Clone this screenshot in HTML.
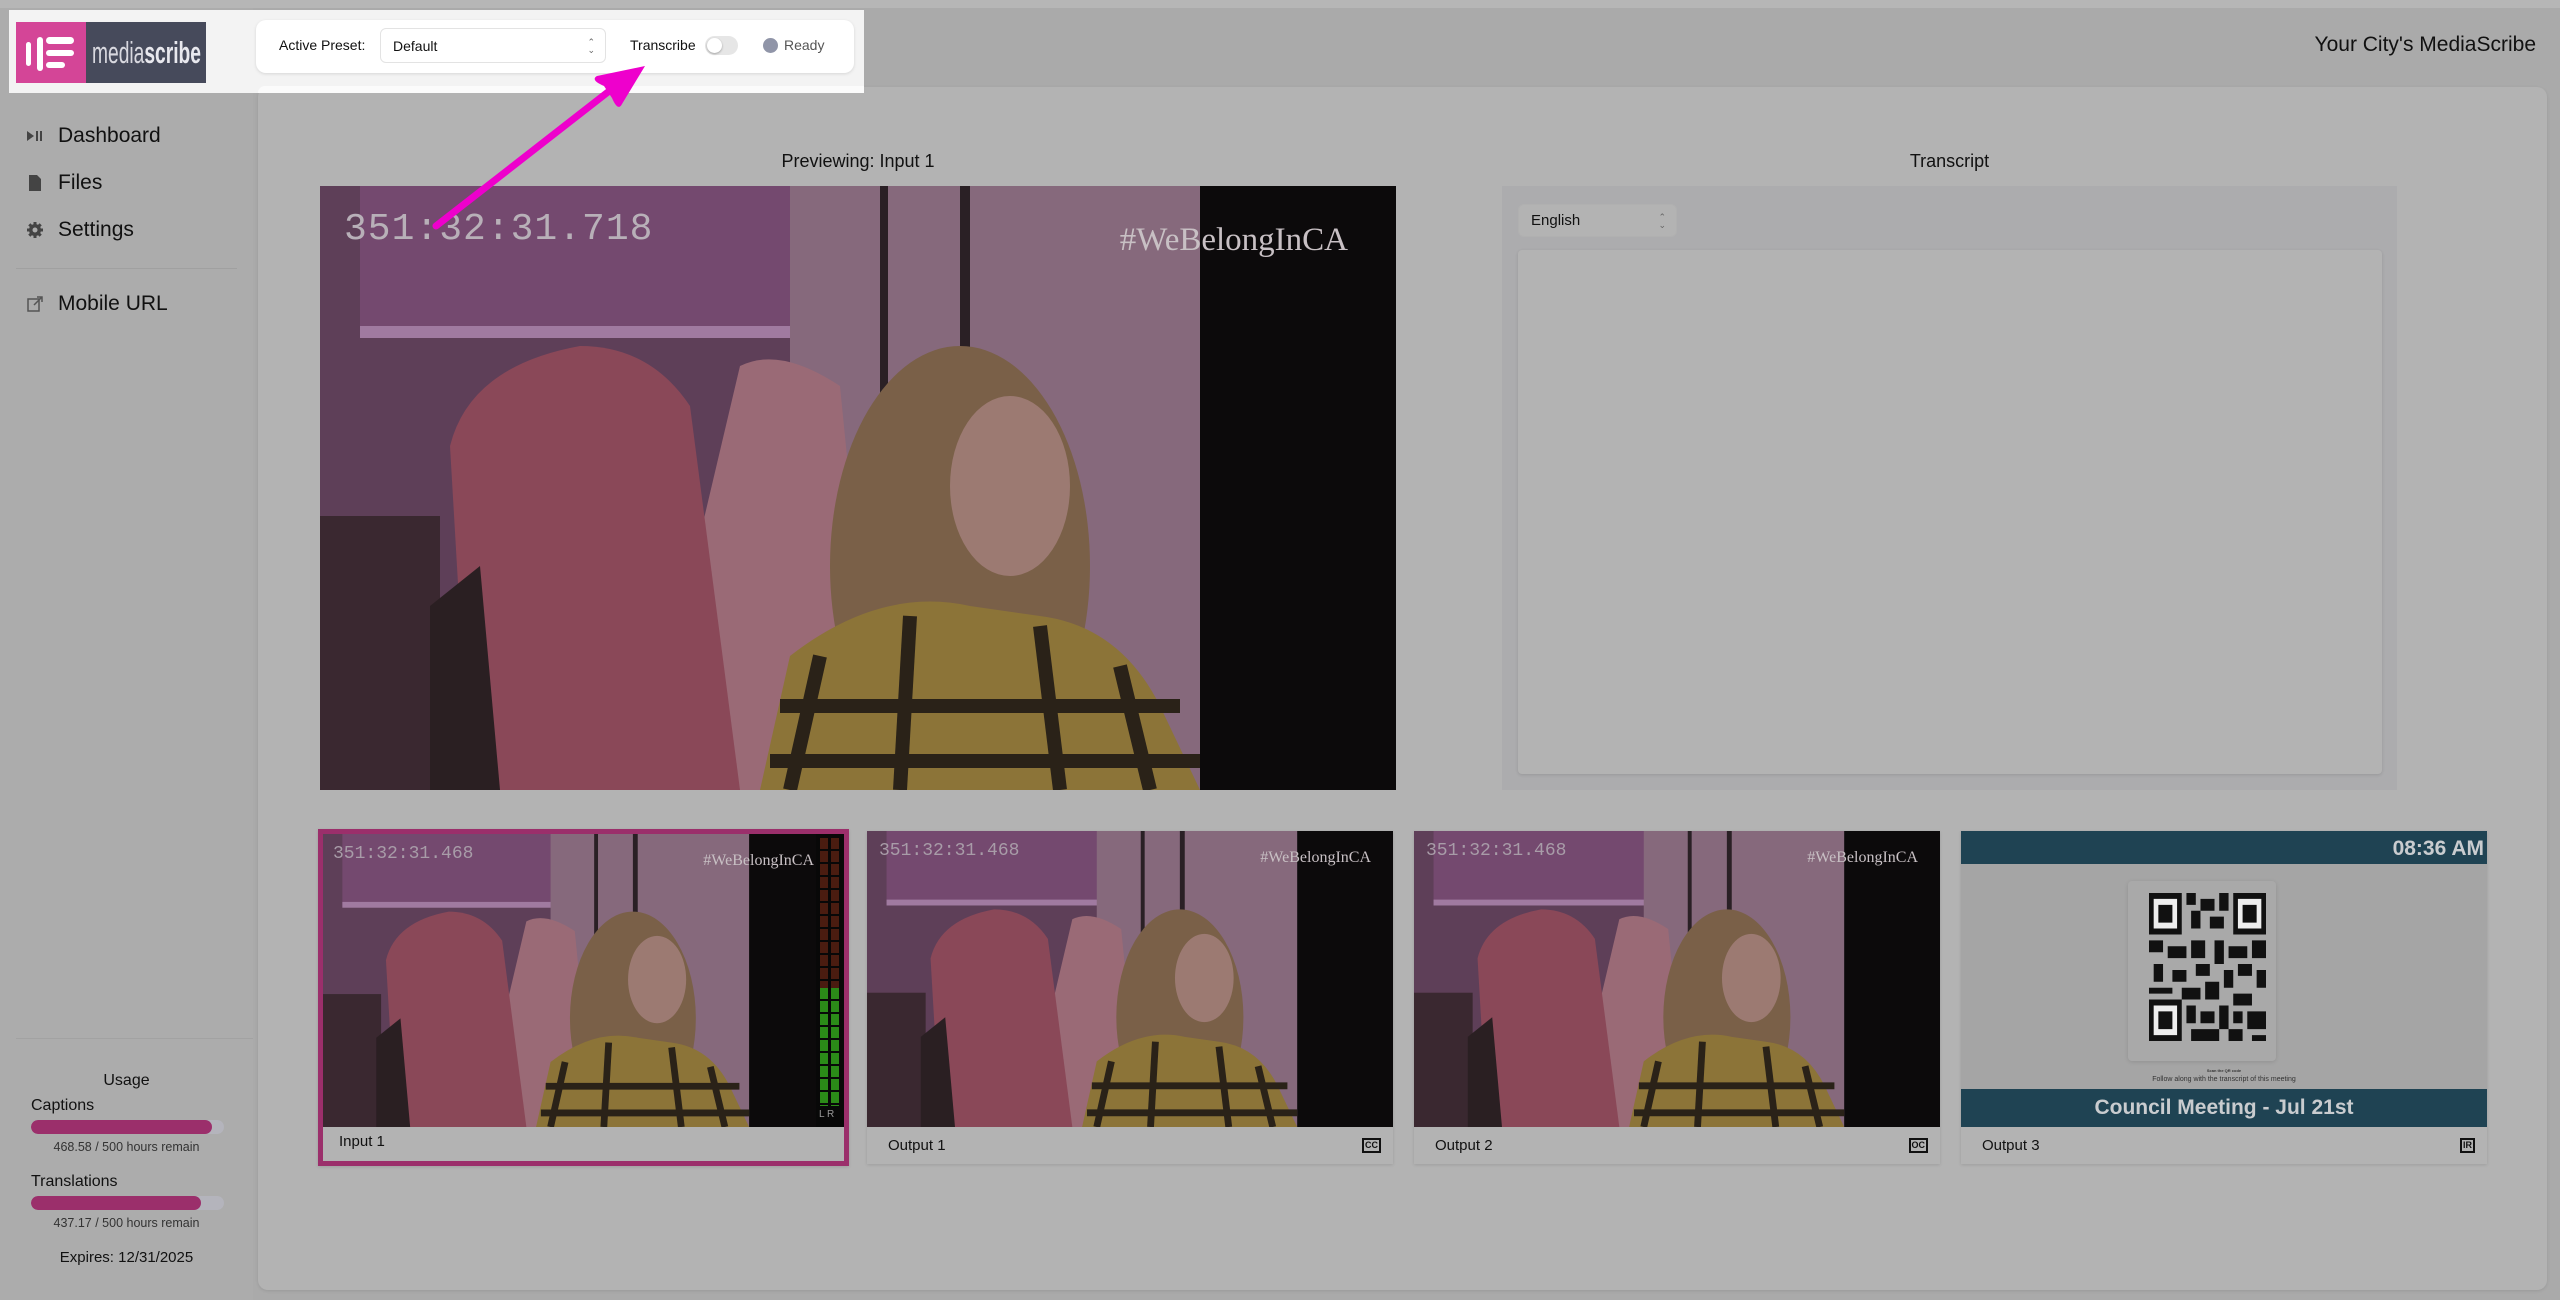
<!DOCTYPE html>
<html><head><meta charset="utf-8">
<style>
*{box-sizing:border-box;margin:0;padding:0}
body{width:2560px;height:1300px;background:#aaaaaa;font-family:"Liberation Sans",sans-serif;color:#111;position:relative;overflow:hidden}
.abs{position:absolute}
.top{left:0;top:0;width:2560px;height:8px;background:#b6b6b6}
.panel{left:258px;top:87px;width:2289px;height:1203px;background:#b3b3b3;border-radius:10px;box-shadow:0 1px 3px rgba(0,0,0,.1)}
.side{left:0;top:8px;width:253px;height:1292px;background:#acacac}
.nav{left:26px;font-size:21px;color:#111;display:flex;align-items:center}
.nav svg{width:18px;height:18px;margin-right:14px;fill:#444}
.hl{left:9px;top:10px;width:855px;height:83px;background:#f3f3f3}
.card{left:256px;top:20px;width:598px;height:53px;background:#fff;border-radius:10px;box-shadow:0 1px 3px rgba(0,0,0,.12)}
.sel{border:1px solid #e3e3e3;border-radius:6px;background:#fff;font-size:15px;display:flex;align-items:center;padding-left:12px}
.caret{position:absolute;right:10px;top:50%;transform:translateY(-50%);font-size:9px;line-height:8px;color:#666;text-align:center}
.vid{overflow:hidden;background:#4a3545}
.thumb{background:#b3b3b3;box-shadow:0 1px 3px rgba(0,0,0,.12)}
.lab{position:absolute;left:0;right:0;bottom:0;height:37px;font-size:15px;display:flex;align-items:center;padding-left:21px}
.badge{position:absolute;right:12px;top:11px;border:2px solid #111;font-size:9px;font-weight:bold;padding:0 1px;line-height:11px}
.bar{height:14px;border-radius:7px;background:#b4b4bc;width:193px;left:31px;overflow:hidden}
.bar div{height:100%;background:#9b2f6b;border-radius:7px}
.small{font-size:12.5px;color:#333;width:253px;text-align:center;left:0}
</style></head><body>
<svg width="0" height="0" style="position:absolute">
<defs>
<symbol id="scene" viewBox="0 0 1076 604" preserveAspectRatio="none">
<rect width="1076" height="604" fill="#5a3d55"/>
<rect x="0" y="0" width="560" height="604" fill="#5e3f58"/>
<rect x="40" y="0" width="440" height="150" fill="#74496f"/>
<rect x="40" y="140" width="440" height="12" fill="#a07aa0"/>
<rect x="0" y="330" width="120" height="274" fill="#3a2830"/>
<rect x="470" y="0" width="420" height="604" fill="#86697c"/>
<rect x="560" y="0" width="8" height="300" fill="#2a2025"/>
<rect x="640" y="0" width="10" height="200" fill="#2a2025"/>
<rect x="880" y="0" width="196" height="604" fill="#0c0a0b"/>
<path d="M420 180 Q460 160 520 200 L560 604 L320 604 Z" fill="#9a6a76"/>
<path d="M130 260 Q150 180 260 160 Q330 160 370 220 L420 604 L150 604 Z" fill="#8a4858"/>
<path d="M110 420 L160 380 L180 604 L110 604 Z" fill="#2a1f22"/>
<ellipse cx="640" cy="380" rx="130" ry="220" fill="#7a6048"/>
<ellipse cx="690" cy="300" rx="60" ry="90" fill="#9c7a72"/>
<path d="M470 470 Q560 400 650 420 L720 430 Q800 440 840 520 L880 604 L440 604 Z" fill="#8c7438"/>
<g stroke="#2a2218" stroke-width="14" fill="none">
<path d="M500 470 L470 604"/><path d="M590 430 L580 604"/><path d="M720 440 L740 604"/><path d="M800 480 L830 604"/>
<path d="M460 520 L860 520"/><path d="M450 575 L880 575"/>
</g>
</symbol>
<symbol id="qr" viewBox="0 0 25 25">
<g fill="#111">
<path d="M0 0h7v7h-7zM18 0h7v7h-7zM0 18h7v7h-7z"/>
</g>
<g fill="#eee"><path d="M1 1h5v5h-5zM19 1h5v5h-5zM1 19h5v5h-5z"/></g>
<g fill="#111"><path d="M2 2h3v3h-3zM20 2h3v3h-3zM2 20h3v3h-3z"/>
<path d="M8 0h2v2h-2zM11 1h3v2h-3zM15 0h2v3h-2zM9 3h2v3h-2zM13 4h3v2h-3zM0 8h3v2h-3zM4 9h4v2h-4zM9 8h3v3h-3zM14 8h2v4h-2zM17 9h4v2h-4zM22 8h3v3h-3zM1 12h2v3h-2zM5 13h3v2h-3zM10 12h3v2h-3zM16 13h2v3h-2zM19 12h3v2h-3zM23 13h2v3h-2zM0 16h5v1h-5zM7 16h4v2h-4zM12 15h3v3h-3zM18 17h4v2h-4zM8 19h2v3h-2zM11 20h3v2h-3zM15 19h2v4h-2zM18 20h2v2h-2zM21 20h4v3h-4zM9 23h6v2h-6zM17 23h3v2h-3zM22 24h3v1h-3z"/></g>
</symbol>
</defs>
</svg>

<div class="abs top"></div>
<div class="abs side"></div>
<div class="abs" style="left:16px;top:1038px;width:237px;height:1px;background:#a2a2a2"></div>
<div class="abs" style="left:16px;top:268px;width:221px;height:1px;background:#a0a0a0"></div>

<div class="abs nav" style="top:124px"><svg viewBox="0 0 18 18"><path d="M1 4l7 5-7 5z"/><rect x="10" y="4" width="2" height="10"/><rect x="14" y="4" width="2" height="10"/></svg>Dashboard</div>
<div class="abs nav" style="top:171px"><svg viewBox="0 0 18 18"><path d="M3 1h8l4 4v12h-12z"/></svg>Files</div>
<div class="abs nav" style="top:218px"><svg viewBox="0 0 18 18"><circle cx="9" cy="9" r="6"/><g stroke="#444" stroke-width="3"><path d="M9 1v16M1 9h16M3.3 3.3l11.4 11.4M14.7 3.3L3.3 14.7"/></g><circle cx="9" cy="9" r="2.5" fill="#acacac"/></svg>Settings</div>
<div class="abs nav" style="top:292px"><svg viewBox="0 0 18 18" style="fill:none;stroke:#555;stroke-width:1.5"><rect x="2" y="4" width="11" height="12"/><path d="M8 10L16 2M11 2h5v5"/></svg>Mobile URL</div>

<div class="abs" style="left:0;top:1072px;width:253px;text-align:center;font-size:16px">Usage</div>
<div class="abs" style="left:31px;top:1097px;font-size:16px">Captions</div>
<div class="abs bar" style="top:1120px"><div style="width:181px"></div></div>
<div class="abs small" style="top:1140px">468.58 / 500 hours remain</div>
<div class="abs" style="left:31px;top:1173px;font-size:16px">Translations</div>
<div class="abs bar" style="top:1196px"><div style="width:170px"></div></div>
<div class="abs small" style="top:1216px">437.17 / 500 hours remain</div>
<div class="abs" style="left:0;top:1249px;width:253px;text-align:center;font-size:15px">Expires: 12/31/2025</div>

<div class="abs" style="right:24px;top:33px;font-size:21px">Your City's MediaScribe</div>

<div class="abs panel"></div>

<div class="abs" style="left:320px;top:151px;width:1076px;text-align:center;font-size:18px">Previewing: Input 1</div>
<div class="abs vid" style="left:320px;top:186px;width:1076px;height:604px">
<svg width="1076" height="604"><use href="#scene"/></svg>
<div class="abs" style="left:24px;top:22px;font-family:'Liberation Mono',monospace;font-size:38px;color:#b8b0b8;letter-spacing:1px">351:32:31.718</div>
<div class="abs" style="right:48px;top:36px;font-family:'Liberation Serif',serif;font-size:33px;color:#c8c0c4">#WeBelongInCA</div>
</div>

<div class="abs" style="left:1502px;top:151px;width:895px;text-align:center;font-size:18px">Transcript</div>
<div class="abs" style="left:1502px;top:186px;width:895px;height:604px;background:#acacae"></div>
<div class="abs sel" style="left:1518px;top:204px;width:159px;height:33px;background:#b3b3b3;border-color:#b0b0b0;font-size:15px">English<div class="caret">⌃<br>⌄</div></div>
<div class="abs" style="left:1518px;top:250px;width:864px;height:524px;background:#b3b3b3;border-radius:4px;box-shadow:0 1px 3px rgba(0,0,0,.12)"></div>

<!-- thumbs -->
<div class="abs thumb" style="left:318px;top:829px;width:531px;height:337px;border:5px solid #9b2f6b">
<div class="abs vid" style="left:0;top:0;width:521px;height:293px">
<svg width="521" height="293"><use href="#scene"/></svg>
<div class="abs" style="left:10px;top:10px;font-family:'Liberation Mono',monospace;font-size:18px;color:#a89ca8">351:32:31.468</div>
<div class="abs" style="right:30px;top:18px;font-family:'Liberation Serif',serif;font-size:16px;color:#c8c0c4">#WeBelongInCA</div>
<div class="abs" style="right:0;top:0;width:28px;height:293px;background:#080808">
<div class="abs" style="left:4px;top:4px;width:8px;height:150px;background:repeating-linear-gradient(#4a1c10 0 11px,#080808 11px 13px)"></div>
<div class="abs" style="left:15px;top:4px;width:8px;height:150px;background:repeating-linear-gradient(#4a1c10 0 11px,#080808 11px 13px)"></div>
<div class="abs" style="left:4px;top:154px;width:8px;height:118px;background:repeating-linear-gradient(#2b8a18 0 11px,#080808 11px 13px)"></div>
<div class="abs" style="left:15px;top:154px;width:8px;height:118px;background:repeating-linear-gradient(#2b8a18 0 11px,#080808 11px 13px)"></div>
<div class="abs" style="left:3px;top:275px;font-size:10px;color:#999">L R</div>
</div>
</div>
<div class="lab" style="padding-left:16px;height:39px">Input 1</div>
</div>

<div class="abs thumb" style="left:867px;top:831px;width:526px;height:333px">
<div class="abs vid" style="left:0;top:0;width:526px;height:296px"><svg width="526" height="296"><use href="#scene"/></svg>
<div class="abs" style="left:12px;top:10px;font-family:'Liberation Mono',monospace;font-size:18px;color:#a89ca8">351:32:31.468</div>
<div class="abs" style="right:22px;top:18px;font-family:'Liberation Serif',serif;font-size:16px;color:#c8c0c4">#WeBelongInCA</div></div>
<div class="lab">Output 1<span class="badge">CC</span></div>
</div>

<div class="abs thumb" style="left:1414px;top:831px;width:526px;height:333px">
<div class="abs vid" style="left:0;top:0;width:526px;height:296px"><svg width="526" height="296"><use href="#scene"/></svg>
<div class="abs" style="left:12px;top:10px;font-family:'Liberation Mono',monospace;font-size:18px;color:#a89ca8">351:32:31.468</div>
<div class="abs" style="right:22px;top:18px;font-family:'Liberation Serif',serif;font-size:16px;color:#c8c0c4">#WeBelongInCA</div></div>
<div class="lab">Output 2<span class="badge">OC</span></div>
</div>

<div class="abs thumb" style="left:1961px;top:831px;width:526px;height:333px">
<div class="abs" style="left:0;top:0;width:526px;height:296px;background:#a5a5a5;overflow:hidden">
<div class="abs" style="left:0;top:0;width:526px;height:33px;background:#1f4353;color:#c9cccf;font-weight:bold;font-size:21px;text-align:right;padding:6px 3px 0 0">08:36 AM</div>
<div class="abs" style="left:167px;top:50px;width:148px;height:180px;background:#a9a9a9;border-radius:4px;box-shadow:0 1px 4px rgba(0,0,0,.12)"></div>
<svg class="abs" style="left:188px;top:62px" width="117" height="148" viewBox="0 0 25 25" preserveAspectRatio="none"><use href="#qr"/></svg>
<div class="abs" style="left:0;top:237px;width:526px;text-align:center;font-size:4px;color:#333;font-weight:bold">Scan the QR code</div>
<div class="abs" style="left:0;top:245px;width:526px;text-align:center;font-size:7px;color:#333">Follow along with the transcript of this meeting</div>
<div class="abs" style="left:0;top:258px;width:526px;height:38px;background:#1f4353;color:#c9cccf;font-weight:bold;font-size:21px;text-align:center;padding-top:7px">Council Meeting - Jul 21st</div>
</div>
<div class="lab">Output 3<span class="badge">IR</span></div>
</div>

<!-- highlighted header -->
<div class="abs hl"></div>
<div class="abs" style="left:258px;top:86px;width:606px;height:7px;background:#fbfbfb;border-radius:8px 0 0 0"></div>
<div class="abs" style="left:16px;top:22px;width:70px;height:61px;background:#d44597"></div>
<div class="abs" style="left:86px;top:22px;width:120px;height:61px;background:#464a5b"></div>
<svg class="abs" style="left:16px;top:22px" width="70" height="61"><g fill="#fff"><rect x="10" y="20" width="5" height="24" rx="2.5"/><rect x="21" y="15" width="6" height="34" rx="3"/><rect x="30" y="15" width="28" height="7" rx="3.5"/><rect x="30" y="28" width="28" height="6" rx="3"/><rect x="30" y="40" width="19" height="6" rx="3"/></g></svg>
<div class="abs" style="left:92px;top:35px;width:200px;font-size:31px;color:#e8e8ee;transform:scaleX(.62);transform-origin:left;letter-spacing:0"><span style="font-weight:normal;opacity:.9">media</span><span style="font-weight:bold">scribe</span></div>

<div class="abs card"></div>
<div class="abs" style="left:279px;top:37px;font-size:14px">Active Preset:</div>
<div class="abs sel" style="left:380px;top:28px;width:226px;height:35px;font-size:14px">Default<div class="caret">⌃<br>⌄</div></div>
<div class="abs" style="left:630px;top:37px;font-size:14px">Transcribe</div>
<div class="abs" style="left:705px;top:36px;width:33px;height:19px;border-radius:10px;background:#e6e6e6"><div style="position:absolute;left:2px;top:2px;width:15px;height:15px;border-radius:50%;background:#fff;box-shadow:0 1px 2px rgba(0,0,0,.3)"></div></div>
<div class="abs" style="left:763px;top:38px;width:15px;height:15px;border-radius:50%;background:#9095a8"></div>
<div class="abs" style="left:784px;top:37px;font-size:14px;color:#555">Ready</div>

<!-- arrow -->
<svg class="abs" style="left:0;top:0" width="900" height="300">
<path d="M436 226 L608 92" stroke="#ee00cc" stroke-width="7" stroke-linecap="round"/>
<path d="M645 66 L597 76 Q590 80 604 86 L612 98 Q618 112 622 104 Z" fill="#ee00cc"/>
</svg>
</body></html>
